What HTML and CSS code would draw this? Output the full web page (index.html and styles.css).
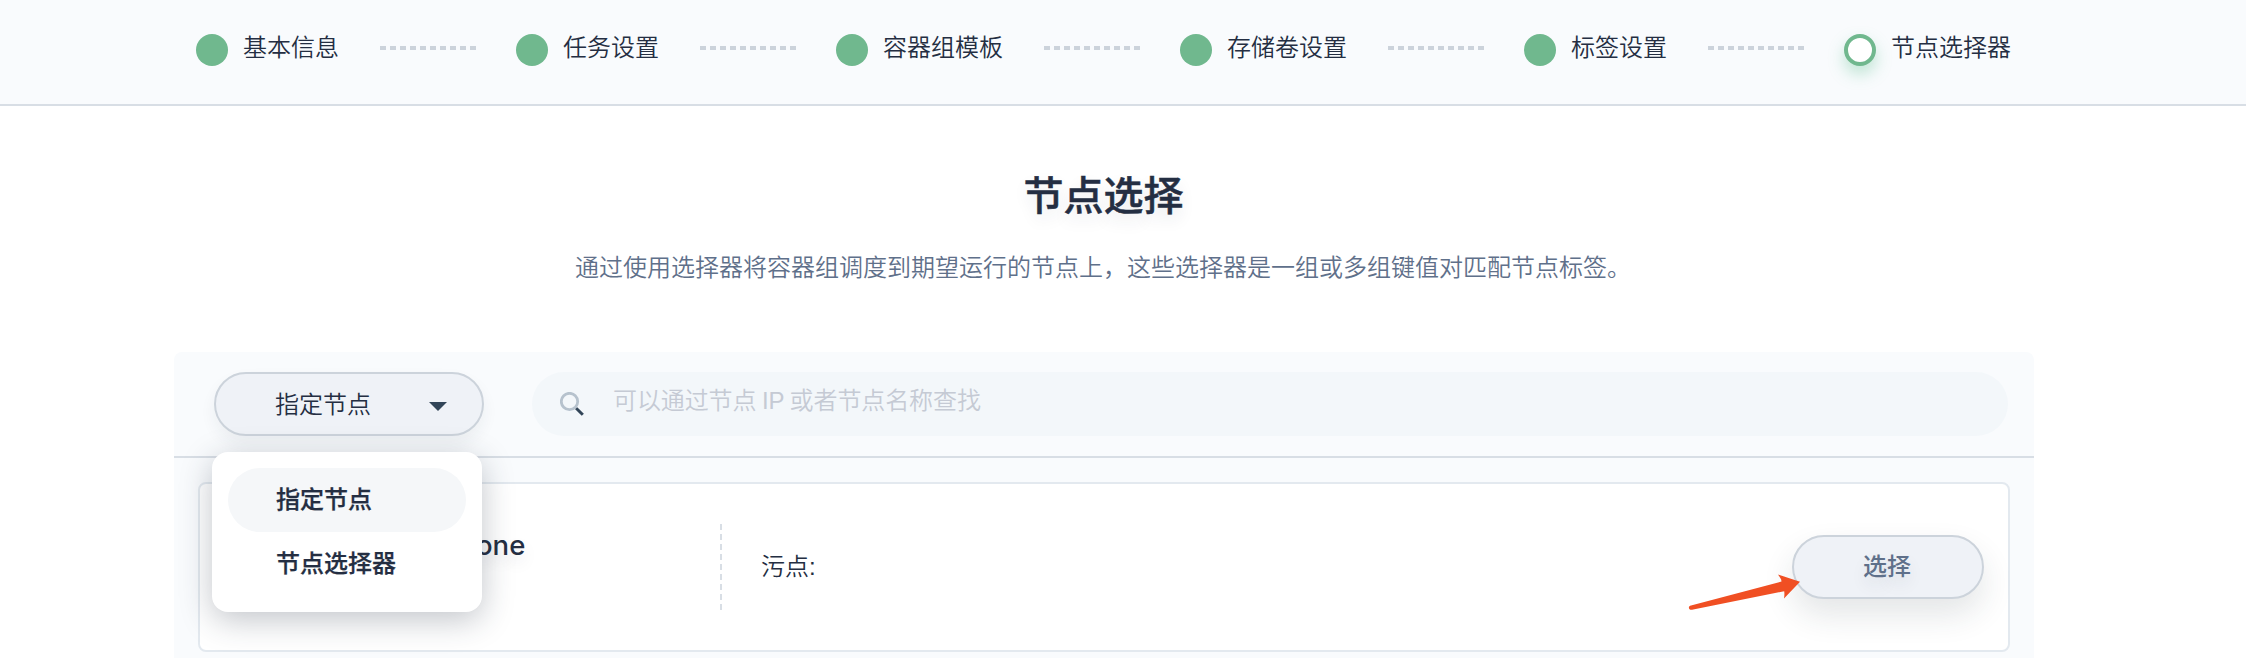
FILE: index.html
```html
<!DOCTYPE html>
<html lang="zh-CN">
<head>
<meta charset="utf-8">
<title>节点选择</title>
<link rel="stylesheet" href="styles.css">
</head>
<body>
<nav class="steps">
  <div class="step"><i class="dot"></i><span class="step-name">基本信息</span></div>
  <i class="dashes"></i>
  <div class="step"><i class="dot"></i><span class="step-name">任务设置</span></div>
  <i class="dashes"></i>
  <div class="step"><i class="dot"></i><span class="step-name">容器组模板</span></div>
  <i class="dashes"></i>
  <div class="step"><i class="dot"></i><span class="step-name">存储卷设置</span></div>
  <i class="dashes"></i>
  <div class="step"><i class="dot"></i><span class="step-name">标签设置</span></div>
  <i class="dashes"></i>
  <div class="step"><i class="dot dot-current"></i><span class="step-name">节点选择器</span></div>
</nav>
<main class="content">
  <h1 class="title">节点选择</h1>
  <p class="desc">通过使用选择器将容器组调度到期望运行的节点上，这些选择器是一组或多组键值对匹配节点标签。</p>
  <section class="panel">
    <div class="toolbar">
      <div class="select">
        <span class="select-value">指定节点</span>
        <svg class="caret" width="18" height="9" viewBox="0 0 18 9"><path d="M0 0h18L9 9z" fill="#324558"/></svg>
        <ul class="menu">
          <li class="menu-item menu-item-active">指定节点</li>
          <li class="menu-item">节点选择器</li>
        </ul>
      </div>
      <div class="search">
        <svg class="search-icon" width="24" height="24" viewBox="0 0 24 24" fill="none"><circle cx="9.5" cy="9.5" r="8.2" stroke="#b6c2cd" stroke-width="2.8"/><path d="M16.200 16.200l6.600 6.600" stroke="#324558" stroke-width="3"/></svg>
        <span class="placeholder">可以通过节点 IP 或者节点名称查找</span>
      </div>
    </div>
    <div class="list">
      <article class="card">
        <div class="node"><span class="node-name">one</span></div>
        <i class="divider"></i>
        <span class="taint">污点:</span>
        <div class="action">
          <button class="pick">选择</button>
          <svg class="arrow" width="114" height="40" viewBox="0 0 114 40"><path d="M3 31.500L93.500 7.500C93.500 5 91.500 3 90 .6L112 7.800L96 24.500C96.500 22 96.500 19 96.200 17.200L4 35.800C0 36 0 32 3 31.500z" fill="#f04f23"/></svg>
        </div>
      </article>
    </div>
  </section>
</main>
</body>
</html>
```

FILE: styles.css
```css
* { box-sizing: border-box; }
body {
  margin: 0;
  height: 658px;
  background: #fff;
  color: #242e42;
  font: 350 24px/36px "Liberation Sans", "Noto Sans CJK SC", sans-serif;
}
.steps {
  display: flex;
  align-items: flex-start;
  gap: 40px;
  height: 106px;
  padding: 30px 0 0 196px;
  background: #f9fbfd;
  border-bottom: 2px solid #d8dee5;
}
.step { display: flex; gap: 15px; padding-right: 1px; }
.dot {
  width: 32px;
  height: 32px;
  margin-top: 4px;
  border-radius: 50%;
  background: #70b88e;
}
.dot-current {
  background: #fff;
  border: 4px solid #70b88e;
  box-shadow: 0 8px 16px rgba(85, 188, 138, .36);
}
.dashes {
  width: 96px;
  height: 4px;
  margin-top: 16px;
  background: repeating-linear-gradient(90deg, #ccd3db 0 6px, transparent 6px 10px);
}
.content {
  display: flex;
  flex-direction: column;
  width: 1860px;
  margin-left: 174px;
}
.title {
  margin: 60px 0 0;
  padding-right: 1px;
  font-size: 40px;
  line-height: 60px;
  font-weight: 500;
  -webkit-text-stroke: .5px #242e42;
  text-align: center;
  text-shadow: 0 8px 16px rgba(36, 46, 66, .1);
}
.desc {
  margin: 24px 0 66px;
  padding-right: 2px;
  color: #5f708a;
  text-align: center;
}
.panel {
  height: 306px;
  background: #f9fbfd;
  border-radius: 8px 8px 0 0;
}
.toolbar {
  display: flex;
  gap: 48px;
  height: 106px;
  padding: 20px 26px 0 40px;
  border-bottom: 2px solid #d8dee5;
}
.select {
  position: relative;
  display: flex;
  align-items: center;
  justify-content: space-between;
  width: 270px;
  height: 64px;
  padding: 2px 35px 0 59px;
  border: 2px solid #ccd3db;
  border-radius: 32px;
  background: #eff2f7;
  box-shadow: 0 8px 16px rgba(36, 46, 66, .06);
}
.caret { margin-top: 3px; }
.menu {
  position: absolute;
  z-index: 2;
  top: 78px;
  left: -4px;
  width: 270px;
  height: 160px;
  margin: 0;
  padding: 16px;
  list-style: none;
  background: #fff;
  border-radius: 16px;
  box-shadow: 0 8px 32px rgba(36, 46, 66, .28);
}
.menu-item {
  height: 64px;
  padding-left: 48px;
  border-radius: 32px;
  line-height: 64px;
  font-weight: 500;
  -webkit-text-stroke: .25px #242e42;
}
.menu-item-active { background: #f5f7f9; }
.search {
  flex: 1;
  display: flex;
  gap: 29px;
  height: 64px;
  padding: 0 28px;
  border-radius: 32px;
  background: #f3f7fa;
}
.search-icon { margin-top: 20px; }
.placeholder { line-height: 58px; color: #c5cad4; word-spacing: -1px; letter-spacing: -.1px; }
.list { padding: 24px 24px 6px; }
.card {
  display: flex;
  align-items: center;
  height: 170px;
  border: 2px solid #e3e9ef;
  border-radius: 8px;
  background: #fff;
}
.node {
  width: 520px;
  height: 86px;
  padding: 1px 0 0 276px;
}
.node-name {
  font: 550 27.500px/40px Inter, sans-serif;
  text-shadow: 0 8px 16px rgba(36, 46, 66, .1);
}
.divider {
  width: 2px;
  height: 86px;
  background: repeating-linear-gradient(180deg, #d8dee5 0 6px, transparent 6px 10px);
}
.taint { margin-left: 39px; }
.action { position: relative; margin: 0 24px 0 auto; }
.pick {
  display: block;
  width: 192px;
  height: 64px;
  padding: 0 2px 0 0;
  border: 2px solid #ccd3db;
  border-radius: 32px;
  background: #eff2f7;
  color: #5f708a;
  font: inherit;
  font-weight: 500;
  text-shadow: 0 8px 16px rgba(36, 46, 66, .1);
  box-shadow: 0 16px 32px rgba(36, 50, 56, .12);
}
.arrow { position: absolute; left: -104px; top: 39px; }
```
